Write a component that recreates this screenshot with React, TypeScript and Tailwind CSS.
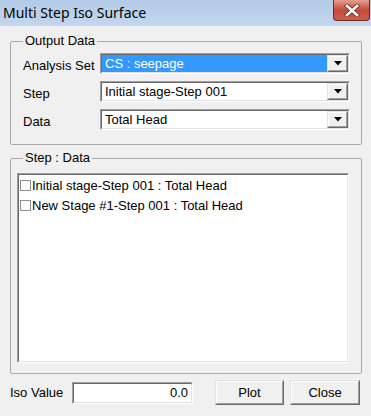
import React from "react";

function Sunken({ className = "", children }: { className?: string; children?: React.ReactNode }) {
  return (
    <div className={`border border-t-[#a0a0a0] border-l-[#a0a0a0] border-b-white border-r-white ${className}`}>
      <div className="h-full w-full border border-t-[#696969] border-l-[#696969] border-b-[#e3e3e3] border-r-[#e3e3e3] bg-white">
        {children}
      </div>
    </div>
  );
}

function Raised({ className = "", children }: { className?: string; children?: React.ReactNode }) {
  return (
    <div className={`border border-t-[#e3e3e3] border-l-[#e3e3e3] border-b-[#696969] border-r-[#696969] ${className}`}>
      <div className="flex h-full w-full items-center justify-center border border-t-white border-l-white border-b-[#a0a0a0] border-r-[#a0a0a0] bg-[#f0f0f0]">
        {children}
      </div>
    </div>
  );
}

function Combo({ value, selected = false }: { value: string; selected?: boolean }) {
  return (
    <Sunken className="h-[21px] w-[250px]">
      <div className="flex h-full">
        <div
          className={`flex flex-1 items-center pl-[3px] leading-none ${
            selected ? "bg-[#3399ff] text-white" : "text-black"
          }`}
        >
          {value}
        </div>
        <Raised className="h-full w-[21px]">
          <svg width="8" height="5" viewBox="0 0 8 5">
            <path d="M0 0h8L4 4.5z" fill="#000" />
          </svg>
        </Raised>
      </div>
    </Sunken>
  );
}

export default function App() {
  const rows = [
    { label: "Analysis Set", value: "CS : seepage", selected: true },
    { label: "Step", value: "Initial stage-Step 001" },
    { label: "Data", value: "Total Head" },
  ];
  const items = ["Initial stage-Step 001 : Total Head", "New Stage #1-Step 001 : Total Head"];

  return (
    <div className="h-[416px] w-[371px] overflow-hidden bg-[#f0f0f0] font-['Liberation_Sans',Arial,sans-serif] text-[13px] text-black">
      {/* title bar */}
      <div className="flex h-[26px] items-start justify-between bg-linear-to-b from-[#b3cbe7] to-[#c3d7ee]">
        <span className="pl-[3px] pt-[3px] font-['Noto_Sans',sans-serif] text-[14px] leading-[19px]">
          Multi Step Iso Surface
        </span>
        <div className="mr-[1px] flex h-[21px] w-[37px] items-center justify-center rounded-b-[4px] border border-t-0 border-[#6e2a1f] bg-linear-to-b from-[#e3a08f] via-[#c4493a] to-[#c9604a]">
          <svg width="16" height="13" viewBox="0 0 16 13">
            <path d="M3 2l10 9M13 2L3 11" stroke="#7a3a30" strokeWidth="4.5" strokeLinecap="square" />
            <path d="M3 2l10 9M13 2L3 11" stroke="#fff" strokeWidth="2.6" strokeLinecap="square" />
          </svg>
        </div>
      </div>

      <div className="pl-[10px] pr-[9px] pt-[7px]">
        {/* Output Data */}
        <fieldset className="h-[112px] rounded-[2px] border border-[#a9a9a9] pl-[12px] pr-[11px]">
          <legend className="px-[2px] leading-[16px]">Output Data</legend>
          <div className="flex flex-col gap-[7px] pt-[4px]">
            {rows.map((r) => (
              <div key={r.label} className="flex items-center">
                <span className="w-[77px] pt-[3px] leading-none">{r.label}</span>
                <Combo value={r.value} selected={r.selected} />
              </div>
            ))}
          </div>
        </fieldset>

        {/* Step : Data */}
        <fieldset className="mt-[5px] h-[224px] rounded-[2px] border border-[#a9a9a9] pl-[6px]">
          <legend className="ml-[6px] px-[2px] leading-[16px]">Step : Data</legend>
          <div className="pt-[7px]">
            <Sunken className="h-[190px] w-[332px]">
              <div className="flex flex-col pl-[1px]">
                {items.map((t) => (
                  <div key={t} className="flex h-[20px] items-center">
                    <span className="h-[11px] w-[11px] border border-[#8e8f8f] bg-white" />
                    <span className="ml-[1px] leading-none">{t}</span>
                  </div>
                ))}
              </div>
            </Sunken>
          </div>
        </fieldset>

        {/* bottom row */}
        <div className="mt-[6px] flex h-[25px] items-center">
          <span className="w-[62px] leading-none">Iso Value</span>
          <Sunken className="h-[22px] w-[121px]">
            <div className="flex h-full items-center justify-end pr-[3px] leading-none">0.0</div>
          </Sunken>
          <Raised className="ml-[22px] h-[25px] w-[69px]">Plot</Raised>
          <Raised className="ml-[6px] h-[25px] w-[70px]">Close</Raised>
        </div>
      </div>
    </div>
  );
}
